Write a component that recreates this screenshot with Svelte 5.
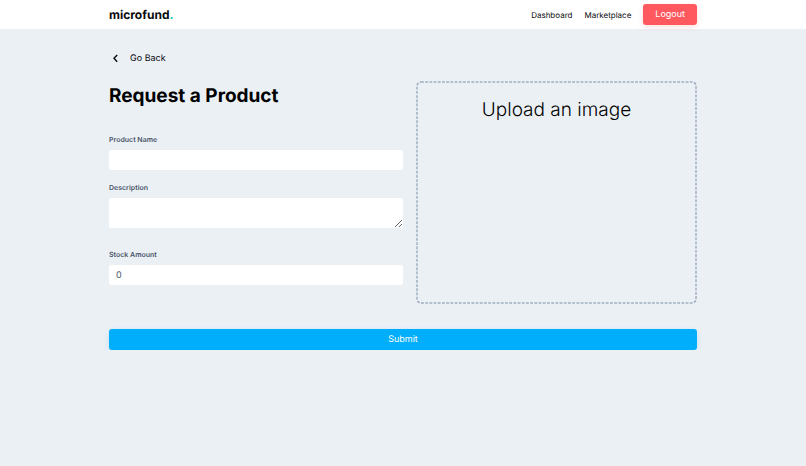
<script lang="ts">
  let name = $state('');
  let description = $state('');
  let stock = $state(0);

  const links = [
    { label: 'Dashboard', href: '#dashboard' },
    { label: 'Marketplace', href: '#marketplace' }
  ];

  const handleSubmit = (e: SubmitEvent) => {
    e.preventDefault();
  };
</script>

<header>
  <div class="container bar">
    <a class="logo" href="#home">microfund<span>.</span></a>
    <nav>
      {#each links as link}
        <a href={link.href}>{link.label}</a>
      {/each}
      <button class="logout" type="button">Logout</button>
    </nav>
  </div>
</header>

<main class="container">
  <a class="back" href="#back">
    <svg viewBox="0 0 12 12" width="12" height="12" aria-hidden="true">
      <path d="M8.2 1.9 5 5.3l3.2 3.4" />
    </svg>
    Go Back
  </a>

  <form onsubmit={handleSubmit}>
    <div class="columns">
      <div class="fields">
        <h1>Request a Product</h1>

        <div class="field">
          <label for="name">Product Name</label>
          <input id="name" type="text" bind:value={name} />
        </div>
        <div class="field">
          <label for="description">Description</label>
          <textarea id="description" bind:value={description}></textarea>
        </div>
        <div class="field stock">
          <label for="stock">Stock Amount</label>
          <input id="stock" type="number" bind:value={stock} />
        </div>
      </div>

      <label class="upload">
        <!-- short dashes that a CSS border can't give -->
        <svg class="outline" aria-hidden="true">
          <rect x="1" y="1" rx="4" />
        </svg>
        Upload an image
        <input type="file" accept="image/*" />
      </label>
    </div>

    <button class="submit" type="submit">Submit</button>
  </form>
</main>

<style>
  :global(body) {
    margin: 0;
    background: #ebf0f5;
    color: #0b0c0e;
    font-family: Inter, 'Liberation Sans', sans-serif;
    font-size: 8px;
    text-rendering: geometricPrecision;
  }

  .container {
    box-sizing: border-box;
    width: 100%;
    max-width: 620px;
    margin: 0 auto;
    padding: 0 16px;
  }

  header {
    background: #fff;
  }

  .bar {
    display: flex;
    align-items: center;
    justify-content: space-between;
    height: 29px;
  }

  a {
    color: inherit;
    text-decoration: none;
  }

  button,
  input,
  textarea {
    box-sizing: border-box;
    border: 0;
    font: inherit;
    text-rendering: inherit;
  }

  button {
    border-radius: 3px;
    color: #fff;
    font-size: 9px;
    cursor: pointer;
  }

  .logo {
    font-size: 12px;
    font-weight: 700;
  }

  .logo span {
    color: #12c9b2;
  }

  nav {
    display: flex;
    align-items: center;
    gap: 12px;
  }

  .logout {
    height: 21px;
    padding: 0 12px;
    background: #ff595f;
    box-shadow: 0 2px 6px rgba(255, 89, 95, 0.2);
  }

  .back {
    display: flex;
    align-items: center;
    gap: 9px;
    width: max-content;
    margin-top: 21px;
    font-size: 9px;
    line-height: 17px;
  }

  .back svg {
    fill: none;
    stroke: currentColor;
    stroke-width: 1.4;
  }

  .columns {
    display: grid;
    grid-template-columns: 294fr 281fr;
    gap: 13px;
    margin-top: 14px;
  }

  h1 {
    margin: 0 0 23px;
    font-size: 19px;
    font-weight: 700;
    line-height: 30px;
    color: #000;
  }

  .field {
    margin-bottom: 12px;
  }

  .field label {
    display: block;
    margin-bottom: 5px;
    color: #4a5568;
    font-size: 7px;
    font-weight: 600;
    line-height: 11px;
  }

  .field input,
  .field textarea {
    display: block;
    width: 100%;
    padding: 0 7px;
    border-radius: 2px;
    background: #fff;
    color: #4a5568;
    font-size: 9px;
    outline-color: #00aefb;
  }

  .field input {
    height: 20px;
  }

  .field textarea {
    height: 30px;
    padding: 5px 7px;
  }

  .stock {
    margin-top: 21px;
    margin-bottom: 19px;
  }

  .stock input {
    appearance: textfield;
  }

  .upload {
    position: relative;
    padding: 14px;
    color: #000;
    font-size: 19px;
    font-weight: 300;
    line-height: 30px;
    text-align: center;
    cursor: pointer;
  }

  .outline {
    position: absolute;
    inset: 0;
    width: 100%;
    height: 100%;
  }

  .outline rect {
    width: calc(100% - 2px);
    height: calc(100% - 2px);
    fill: none;
    stroke: #a0aec0;
    stroke-width: 1.5;
    stroke-dasharray: 2.8 1.4;
  }

  .upload input {
    position: absolute;
    width: 1px;
    height: 1px;
    opacity: 0;
  }

  .submit {
    width: 100%;
    height: 21px;
    margin-top: 25px;
    background: #00aefb;
    box-shadow: 0 2px 6px rgba(0, 174, 251, 0.18);
  }
</style>
